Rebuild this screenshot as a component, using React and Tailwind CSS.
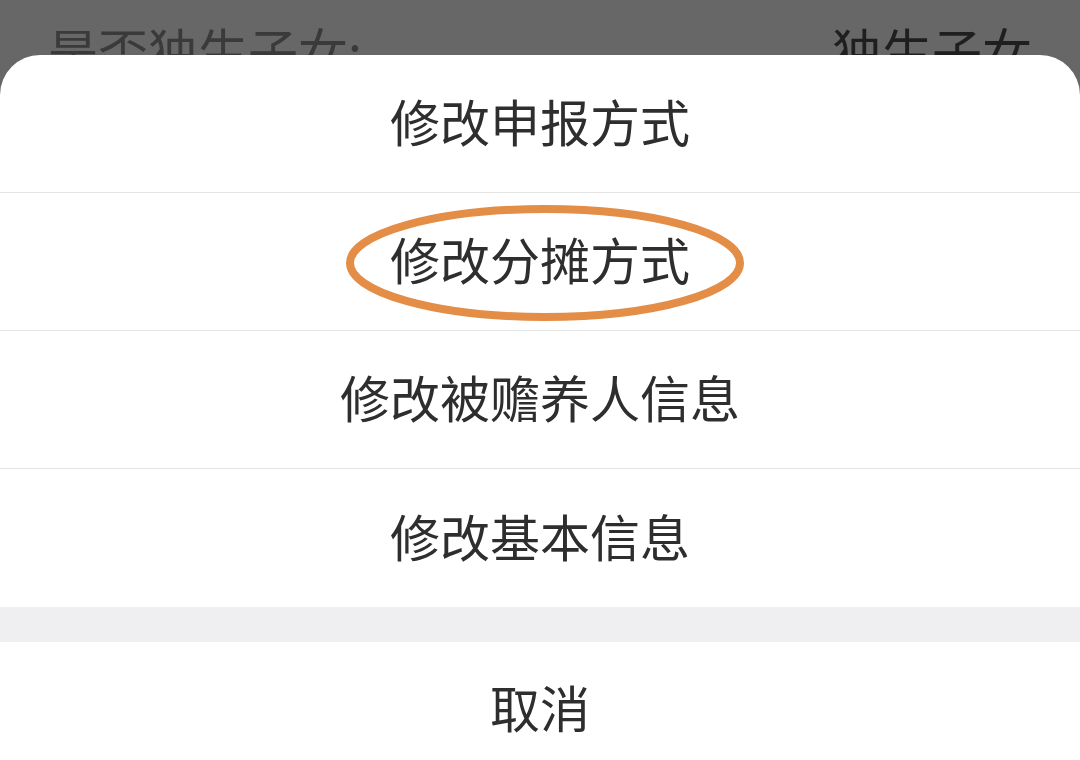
import React from 'react';

const items = ['修改申报方式', '修改分摊方式', '修改被赡养人信息', '修改基本信息'];

export default function App() {
  return (
    <div
      className="relative w-[1080px] h-[760px] overflow-hidden bg-[#676767]"
      style={{ fontFamily: '"Noto Sans CJK SC", "Noto Sans", sans-serif' }}
    >
      {/* background page, dimmed */}
      <div className="flex justify-between items-start px-[48px] pt-[14px] text-[50px] leading-[70px]">
        <span className="text-[#3a3a3a]">是否独生子女:</span>
        <span className="text-[#1f1f1f]">独生子女</span>
      </div>

      {/* action sheet */}
      <div className="absolute left-0 right-0 top-[55px] h-[760px] bg-white rounded-t-[40px] flex flex-col text-[#2e2e2e]">
        {items.map((label, i) => (
          <div
            key={label}
            className={`relative shrink-0 h-[138px] pb-[6px] flex items-center justify-center text-[50px] ${i < items.length - 1 ? 'border-b border-[#e4e4e4]' : ''}`}
          >
            <span>{label}</span>
            {i === 1 && (
              <svg className="absolute left-[344px] top-[10px]" width="402" height="120" viewBox="0 0 402 120">
                <ellipse cx="201" cy="60" rx="195" ry="54" fill="none" stroke="#e38d47" strokeWidth="8" />
              </svg>
            )}
          </div>
        ))}
        <div className="shrink-0 h-[35px] bg-[#efeff2]" />
        <div className="shrink-0 h-[138px] pb-[10px] flex items-center justify-center text-[50px]">取消</div>
      </div>
    </div>
  );
}
